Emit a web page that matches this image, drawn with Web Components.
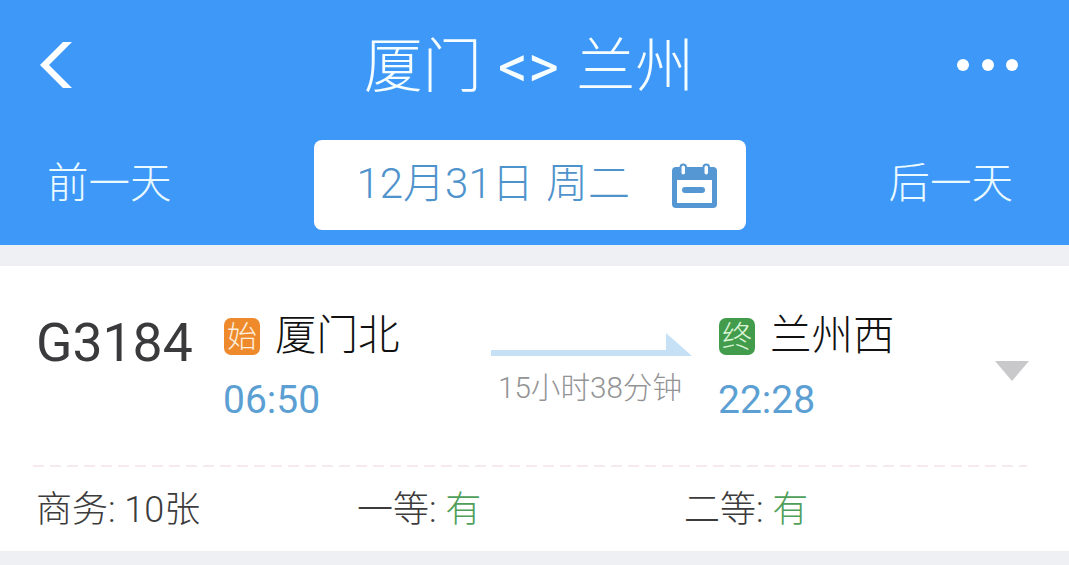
<!DOCTYPE html>
<html lang="zh-CN">
<head>
<meta charset="utf-8">
<title>厦门 &lt;&gt; 兰州</title>
<style>
html,body{margin:0;padding:0;background:#eff0f3;}
body{width:1069px;height:565px;overflow:hidden;font-family:Roboto,"Noto Sans CJK SC",sans-serif;}
</style>
</head>
<body>
<app-shell>
  <top-bar>厦门 <b>&lt;&gt;</b> 兰州</top-bar>
  <date-bar prev="前一天" next="后一天">12月31日 周二</date-bar>
  <train-card>
    <station-info slot="from" badge="始" tone="#ee8a2c" ink="#fdeedd" name="厦门北" time="06:50"></station-info>
    <station-info slot="to" badge="终" tone="#429c4b" ink="#dcf5d8" name="兰州西" time="22:28"></station-info>
    <seat-info slot="seats" label="商务:" value="10张" style="width:321px"></seat-info>
    <seat-info slot="seats" label="一等:" value="有" avail style="width:327px"></seat-info>
    <seat-info slot="seats" label="二等:" value="有" avail></seat-info>
  </train-card>
</app-shell>
<script>
const FONT='Roboto,"Noto Sans CJK SC",sans-serif';
function def(name,html,init){
  customElements.define(name,class extends HTMLElement{
    constructor(){super();this.attachShadow({mode:'open'}).innerHTML=html;}
    connectedCallback(){if(init)init(this,this.shadowRoot);}
  });
}
def('app-shell',`<style>:host{display:block;width:1069px;height:565px;background:#eff0f3;}</style><slot></slot>`);

def('top-bar',`<style>
:host{display:flex;align-items:center;justify-content:space-between;height:140px;padding:0 51px 0 40px;box-sizing:border-box;background:#3d98f8;color:#fff;font-family:${FONT};}
.back{width:32px;height:46px;display:block;margin-top:-10px;}
.title{font-size:59px;line-height:70px;font-weight:300;margin:-6px 0 0 29px;color:#f6fdff;white-space:nowrap;}
::slotted(b){font-weight:400;margin:0 3px 0 2px;}
.more{display:flex;gap:12.5px;margin-top:-10px;}
.more i{display:block;width:12px;height:12px;border-radius:50%;background:#fff;}
</style>
<svg class="back" viewBox="0 0 32 46" aria-hidden="true"><path d="M23 0H32L9 23L32 46H23L0 23Z" fill="#fff"/></svg>
<div class="title"><slot></slot></div>
<div class="more"><i></i><i></i><i></i></div>`);

def('date-bar',`<style>
:host{display:flex;align-items:flex-start;justify-content:space-between;height:105px;padding:0 56px 0 47px;box-sizing:border-box;background:#3d98f8;font-family:${FONT};}
.side{font-size:41.5px;line-height:60px;font-weight:300;color:#eafaff;margin-top:14px;}
.box{display:flex;align-items:center;justify-content:space-between;width:432px;height:90px;padding:0 29px 0 43px;box-sizing:border-box;background:#fff;border-radius:8px;margin-left:-1px;}
.txt{font-size:42px;line-height:60px;font-weight:300;color:#4f93cc;margin-top:-3px;white-space:nowrap;word-spacing:2px;}
svg{width:46px;height:46px;display:block;margin-top:2px;}
</style>
<div class="side" id="p"></div>
<div class="box"><div class="txt"><slot></slot></div>
<svg viewBox="0 0 46 46" aria-hidden="true">
<rect x="1" y="4" width="45" height="41" rx="4" fill="#5497d3"/>
<rect x="6" y="17" width="35" height="23" fill="#fff"/>
<rect x="11" y="24" width="23" height="6" rx="3" fill="#5497d3"/>
<rect x="9.5" y="1.5" width="5.5" height="11" rx="2.75" fill="#fff" stroke="#5497d3" stroke-width="2"/>
<rect x="32.5" y="1.5" width="5.5" height="11" rx="2.75" fill="#fff" stroke="#5497d3" stroke-width="2"/>
</svg></div>
<div class="side" id="n"></div>`,(el,r)=>{r.getElementById('p').textContent=el.getAttribute('prev');r.getElementById('n').textContent=el.getAttribute('next');});

def('station-info',`<style>
:host{display:block;font-family:${FONT};}
.top{display:flex;align-items:center;height:38px;}
.badge{display:flex;align-items:center;justify-content:center;width:36px;height:37px;border-radius:7px;font-size:30px;line-height:37px;font-weight:300;flex:none;}
.name{font-size:41.5px;line-height:38px;color:#111;font-weight:300;margin-left:15px;white-space:nowrap;}
.time{font-size:39px;line-height:40px;color:#5b9fd3;margin:25px 0 0 -1px;}
</style>
<div class="top"><span class="badge" id="b"></span><span class="name" id="n"></span></div>
<div class="time" id="t"></div>`,(el,r)=>{
  const b=r.getElementById('b');b.textContent=el.getAttribute('badge');b.style.background=el.getAttribute('tone');b.style.color=el.getAttribute('ink');
  r.getElementById('n').textContent=el.getAttribute('name');r.getElementById('t').textContent=el.getAttribute('time');});

def('seat-info',`<style>
:host{display:block;font-family:${FONT};font-size:36px;line-height:40px;color:#3c3c3c;font-weight:300;white-space:nowrap;}
.a{color:#4f9f5b;}
</style><span id="l"></span> <span id="v"></span>`,(el,r)=>{
  r.getElementById('l').textContent=el.getAttribute('label');
  const v=r.getElementById('v');v.textContent=el.getAttribute('value');
  if(el.hasAttribute('avail'))v.className='a';});

def('train-card',`<style>
:host{display:block;background:#fff;margin-top:21px;height:285px;padding-top:51px;box-sizing:border-box;font-family:${FONT};}
.route{display:flex;align-items:flex-start;height:103px;padding-left:36px;}
.no{width:188px;flex:none;font-size:53.5px;line-height:54px;color:#3a3a3c;margin-top:-1px;}
.from{width:267px;flex:none;display:block;}
.mid{width:201px;flex:none;display:block;}
.mid svg{display:block;width:201px;height:23px;margin-top:16px;}
.dur{font-size:29.6px;line-height:34px;color:#939395;font-weight:300;margin:15px 0 0 7px;white-space:nowrap;}
.to{width:276px;flex:none;margin-left:27px;display:block;}
.caret{width:34px;height:20px;flex:none;margin-top:44px;display:block;}
.dash{height:2px;background:repeating-linear-gradient(90deg,#f6eaee 0 11px,transparent 11px 17px);margin:45px 42px 0 33px;}
.seats{display:flex;padding:23px 0 0 36px;}
</style>
<div class="route">
  <div class="no">G3184</div>
  <div class="from"><slot name="from"></slot></div>
  <div class="mid">
    <svg viewBox="0 0 201 23" aria-hidden="true"><path d="M0 17H175V0L201 23H0z" fill="#c6e0f6"/></svg>
    <div class="dur">15小时38分钟</div>
  </div>
  <div class="to"><slot name="to"></slot></div>
  <svg class="caret" viewBox="0 0 34 20" aria-hidden="true"><path d="M0 0H34L17 20z" fill="#c9c9cb"/></svg>
</div>
<div class="dash"></div>
<div class="seats"><slot name="seats"></slot></div>`);
</script>
</body>
</html>
